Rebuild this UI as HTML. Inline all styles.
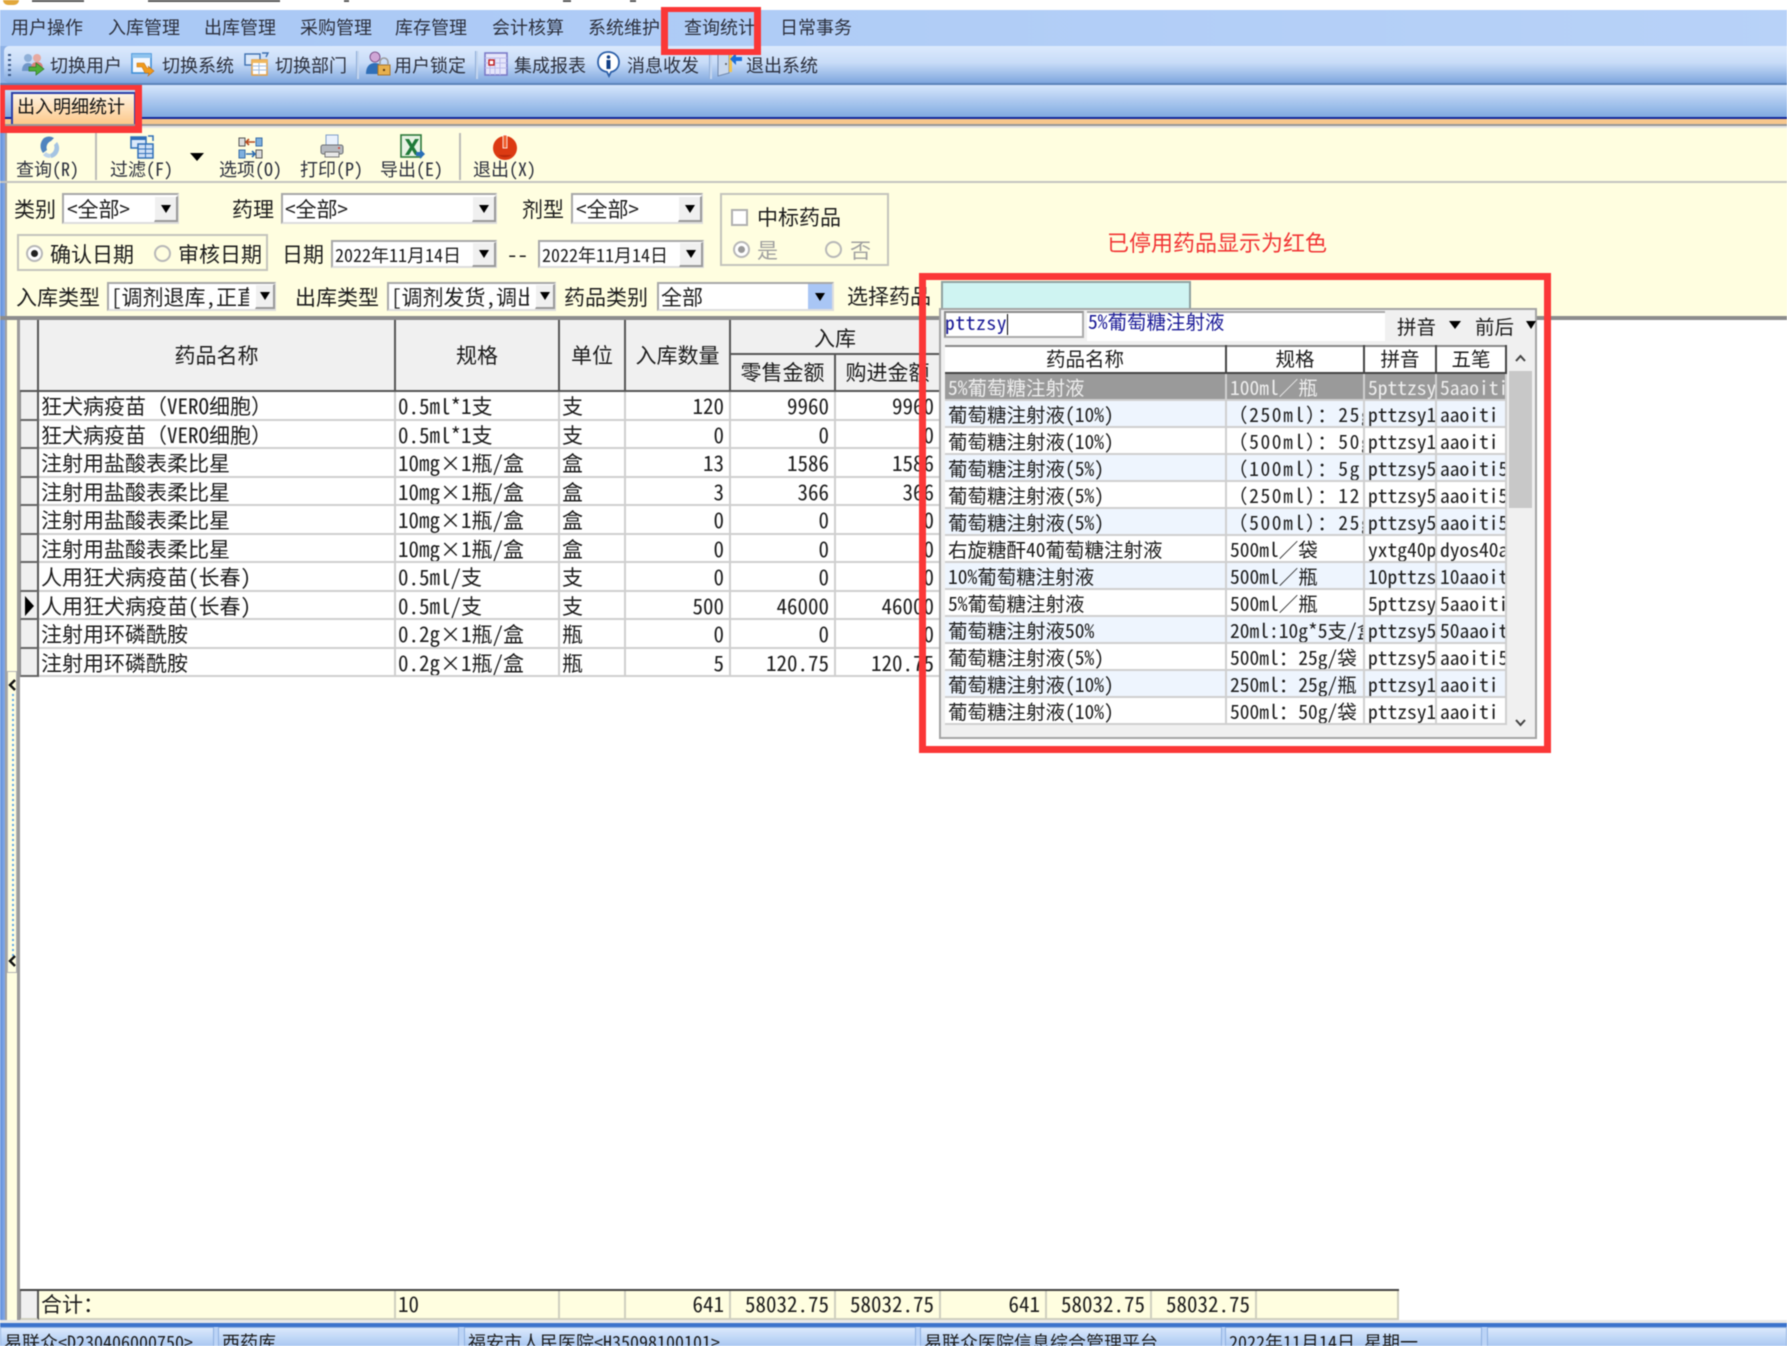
<!DOCTYPE html>
<html lang="zh"><head><meta charset="utf-8"><title>出入明细统计</title>
<style>
html,body{margin:0;padding:0;background:#fff}
#p{position:relative;width:1787px;height:1346px;overflow:hidden;background:#fff;font-family:"Noto Sans Mono CJK SC","WenQuanYi Zen Hei Mono","WenQuanYi Zen Hei","Liberation Mono","Noto Sans CJK SC",monospace;color:#1c1c1c;filter:blur(.45px)}
#p div,#p span,#p svg{position:absolute}
#p td div,#p td span{position:static}
.t{white-space:nowrap;line-height:28px;font-size:21px}
.m{font-size:18px;color:#2b2f3c}
.b{position:absolute;background:#f0f0f0;border-left:1px solid #fff;border-top:1px solid #fff;border-right:2px solid #9a9a9a;border-bottom:2px solid #9a9a9a;box-sizing:border-box}
.b:after{content:"";position:absolute;left:50%;top:50%;margin:-4px 0 0 -5px;border:5px solid transparent;border-top:8px solid #000;border-bottom:0}
.c{background:#fff;border:2px solid #a8a8a8;border-right-color:#ddd;border-bottom-color:#ddd;box-sizing:border-box;overflow:hidden}
.g{border:2px solid #c4c4bc;box-sizing:border-box}
.sep{width:2px;background:#c3d5ee;border-left:1px solid #8fadd8}
.r{border-radius:50%;background:#fff;border:2px solid #b8b8b8;box-sizing:border-box;width:17px;height:17px}
.r:after{content:"";position:absolute;left:3px;top:3px;width:7px;height:7px;border-radius:50%}
.on:after{background:#222}
.dis:after{background:#999}
.red{background:#fb3737;z-index:9}
.h{background:#f0f0f0;text-align:center;line-height:28px;font-size:21px;box-sizing:border-box;border-right:2px solid #555;border-bottom:2px solid #555}
table{border-collapse:separate;border-spacing:0;table-layout:fixed;position:absolute}
td{padding:0;white-space:nowrap;overflow:hidden;box-sizing:border-box}
#gt td{height:28.5px;font-size:21px;line-height:22px;vertical-align:top;border-right:2px solid #cfcfcf;border-bottom:2px solid #cfcfcf;padding:3px 0 0 2px}
#gt td.n{text-align:right;padding:3px 5px 0 0}
#gt td.i{background:#f0f0f0;border-right:2px solid #555;border-bottom:2px solid #666;padding:0;border-left:1px solid #888;font-size:0}
#pt td{height:27px;font-size:19.5px;line-height:25px;border-right:2px solid #cfcfcf;border-bottom:2px solid #cfcfcf;padding-left:3px;background:#fff}
#pt tr.a td{background:#eef5fe}
#pt tr.s td{background:#9a9a9a;color:#eee}
#pt td.w{letter-spacing:1.6px;padding-left:1px}
#tt td{height:29px;font-size:21px;line-height:27px;border-right:2px solid #cfcfbf;border-bottom:2px solid #cfcfbf;background:#fffee0;padding-left:2px}
#tt td.n{text-align:right;padding:0 5px 0 0}
.st{top:1327px;height:19px;background:linear-gradient(#dbe9fc,#aac8f2);border:1px solid #8fb0e0;border-bottom:0;box-sizing:border-box;overflow:hidden}
.st span{left:3px;top:2px;font-size:18px;line-height:24px;white-space:nowrap;color:#1c1c1c}
</style></head><body><div id="p">

<!-- title strip -->
<div style="left:0;top:0;width:1787px;height:10px;background:#fff"></div>
<div style="left:3px;top:0;width:16px;height:5px;background:#e2a83c;border-radius:0 0 8px 8px"></div>
<div style="left:32px;top:0;width:52px;height:2px;background:#555"></div>
<div style="left:148px;top:0;width:132px;height:2px;background:#555"></div>
<div style="left:344px;top:0;width:5px;height:2px;background:#555"></div>
<div style="left:563px;top:0;width:8px;height:2px;background:#555"></div>
<div style="left:630px;top:0;width:6px;height:2px;background:#555"></div>

<!-- menu -->
<div style="left:0;top:10px;width:1787px;height:36px;background:linear-gradient(90deg,#a9c8f5,#b8d2f8)"></div>
<span class="t m" style="left:11px;top:13px">用户操作</span>
<span class="t m" style="left:108px;top:13px">入库管理</span>
<span class="t m" style="left:204px;top:13px">出库管理</span>
<span class="t m" style="left:300px;top:13px">采购管理</span>
<span class="t m" style="left:395px;top:13px">库存管理</span>
<span class="t m" style="left:492px;top:13px">会计核算</span>
<span class="t m" style="left:588px;top:13px">系统维护</span>
<span class="t m" style="left:684px;top:13px">查询统计</span>
<span class="t m" style="left:780px;top:13px">日常事务</span>

<!-- toolbar -->
<div style="left:0;top:46px;width:1787px;height:39px;background:#8fb2e6"></div>
<div style="left:4px;top:46px;width:1783px;height:37px;background:linear-gradient(#dceafd 0,#c8dcf8 45%,#7fa7de 100%);border-radius:5px 0 0 5px"></div>
<div style="left:0;top:83px;width:1787px;height:2px;background:#5c84bb"></div>
<div style="left:8px;top:54px;width:3px;height:22px;background:repeating-linear-gradient(#3d5a88 0,#3d5a88 2px,transparent 2px,transparent 5px)"></div>

<svg style="left:20px;top:52px" width="26" height="25" viewBox="0 0 26 25"><circle cx="8" cy="6" r="4" fill="#8fb0d8"/><circle cx="17" cy="6" r="4" fill="#e7a9a0"/><path d="M2 19c0-6 3-8 6-8s6 2 6 8z" fill="#6f96c8"/><path d="M11 17c0-6 3-7 6-7s6 1 6 7z" fill="#d8807a"/><path d="M9 15h7v-4l8 6-8 6v-4H9z" fill="#4fae3a" stroke="#2e7a22" stroke-width=".7"/></svg>
<span class="t m" style="left:50px;top:51px">切换用户</span>
<svg style="left:131px;top:53px" width="26" height="25" viewBox="0 0 26 25"><rect x="1" y="1" width="19" height="19" fill="#f4f8fe" stroke="#3f8fd8" stroke-width="1.6"/><rect x="1" y="1" width="19" height="4" fill="#8fc3ee"/><path d="M6 10h7l3 5h2l-1-2 6 5-6 5 1-3h-4l-3-6H6z" fill="#f09a1c" stroke="#c56f10" stroke-width=".6"/></svg>
<span class="t m" style="left:162px;top:51px">切换系统</span>
<svg style="left:244px;top:52px" width="26" height="25" viewBox="0 0 26 25"><rect x="1" y="2" width="15" height="11" fill="#dbe9fb" stroke="#3c6fb0" stroke-width="1.4"/><path d="M18 1l6 0-2 4" fill="none" stroke="#3c6fb0" stroke-width="1.4"/><rect x="8" y="8" width="15" height="15" fill="#fff" stroke="#e3a24a" stroke-width="1.6"/><rect x="8" y="8" width="15" height="3" fill="#f0b85e"/><path d="M8 14h15M8 18h15M15 11v12" stroke="#9fbde0" stroke-width="1"/></svg>
<span class="t m" style="left:275px;top:51px">切换部门</span>
<div class="sep" style="left:356px;top:51px;height:28px"></div>
<svg style="left:365px;top:51px" width="26" height="26" viewBox="0 0 26 26"><circle cx="10" cy="6" r="5" fill="#cfa6d6" stroke="#6d3f7a" stroke-width=".8"/><path d="M1 23c0-8 4-11 9-11 3 0 5 1 6 3v8z" fill="#2f6fb8"/><rect x="13" y="14" width="12" height="10" fill="#e7b04d" stroke="#a9742a"/><path d="M15 14v-3a4 4 0 018 0v3" fill="none" stroke="#9a9a9a" stroke-width="1.6"/><rect x="18" y="18" width="2" height="2" fill="#5b3a10"/></svg>
<span class="t m" style="left:394px;top:51px">用户锁定</span>
<div class="sep" style="left:475px;top:51px;height:28px"></div>
<svg style="left:484px;top:52px" width="24" height="24" viewBox="0 0 24 24"><rect x="1" y="1" width="22" height="22" fill="#e6e6fb" stroke="#7b7bc8" stroke-width="1.6"/><path d="M1 6h22M1 11h22M1 16h22M6 6v17M11 6v17M16 6v17" stroke="#bcbcec" stroke-width="1"/><rect x="5" y="8" width="5" height="5" fill="#fff" stroke="#c01818" stroke-width="1.4"/></svg>
<span class="t m" style="left:514px;top:51px">集成报表</span>
<svg style="left:596px;top:50px" width="25" height="28" viewBox="0 0 25 28"><path d="M12 2c6 0 11 4 11 10s-4 9-8 10l-2 4-2-4C6 21 2 18 2 12S6 2 12 2z" fill="#fff" stroke="#2c5fa8" stroke-width="1.8"/><circle cx="12.5" cy="7" r="1.8" fill="#123f86"/><rect x="10.5" y="10" width="4" height="9" fill="#123f86"/></svg>
<span class="t m" style="left:627px;top:51px">消息收发</span>
<div class="sep" style="left:709px;top:51px;height:28px"></div>
<svg style="left:716px;top:51px" width="27" height="26" viewBox="0 0 27 26"><path d="M2 3l11-2v21l-11 3z" fill="#c8d8ee" stroke="#7088ad"/><path d="M13 3h3v18h-3z" fill="#f3c44e"/><circle cx="10" cy="13" r="1" fill="#555"/><path d="M26 6h-6V2l-6 6 6 6v-4h6z" fill="#1c6fd8"/></svg>
<span class="t m" style="left:746px;top:51px">退出系统</span>

<!-- tab bar -->
<div style="left:0;top:85px;width:1787px;height:33px;background:linear-gradient(#d6e6fc,#7ea8e0)"></div>
<div style="left:0;top:117px;width:1787px;height:2px;background:#12269a"></div>
<div style="left:0;top:119px;width:1787px;height:5px;background:#f7c78d"></div>
<div style="left:0;top:124px;width:1787px;height:2px;background:#999"></div>
<div style="left:0;top:126px;width:1787px;height:2px;background:#e6e6e6"></div>
<div style="left:11px;top:92px;width:125px;height:32px;box-sizing:border-box;border:2px solid #2b3fa8;border-bottom:0;background:linear-gradient(#fff4e2,#fdc88a)"></div>
<span class="t m" style="left:17px;top:92px;color:#111">出入明细统计</span>

<!-- yellow panel -->
<div style="left:0;top:128px;width:1787px;height:192px;background:#fffee0"></div>
<div style="left:0;top:128px;width:5px;height:1218px;background:linear-gradient(90deg,#5f8fdc,#86aae6)"></div>
<div style="left:5px;top:128px;width:2px;height:1195px;background:#a0a0a0"></div>
<div style="left:0;top:181px;width:1787px;height:2px;background:#c4c4c0"></div>
<div style="left:7px;top:320px;width:10px;height:1000px;background:#fffee0"></div>
<div style="left:17px;top:320px;width:3px;height:1000px;background:#9a9a9a"></div>
<div style="left:0;top:316px;width:1787px;height:4px;background:#8c8c8c"></div>

<!-- splitter -->
<div style="left:7px;top:671px;width:10px;height:302px;border:1px solid #b5b5b5;box-sizing:border-box;background:#fffee0"></div>
<div style="left:12px;top:694px;width:2px;height:262px;background:repeating-linear-gradient(#5fa6e6 0,#5fa6e6 2px,transparent 2px,transparent 5px)"></div>
<svg style="left:8px;top:678px" width="9" height="14" viewBox="0 0 9 14"><path d="M7 2L2 7l5 5" fill="none" stroke="#111" stroke-width="2.4"/></svg>
<svg style="left:8px;top:954px" width="9" height="14" viewBox="0 0 9 14"><path d="M7 2L2 7l5 5" fill="none" stroke="#111" stroke-width="2.4"/></svg>

<!-- action buttons -->
<div style="left:95px;top:133px;width:2px;height:47px;background:#bdbdb8"></div>
<div style="left:459px;top:133px;width:2px;height:47px;background:#bdbdb8"></div>
<svg style="left:36px;top:135px" width="26" height="26" viewBox="0 0 26 26"><path d="M8 3a10 10 0 0110 0l-3 3a7 7 0 00-4 9l-4 3a11 11 0 011-15z" fill="#4f84bf"/><path d="M21 7a10 10 0 01-6 16l-1-4a7 7 0 004-9z" fill="#a5c4e2"/><path d="M14 23a10 10 0 01-7-3l3-3a6 6 0 005 2z" fill="#bcd3ea"/></svg>
<svg style="left:130px;top:134px" width="24" height="25" viewBox="0 0 24 25"><rect x="1" y="3" width="15" height="11" fill="#dbe9fb" stroke="#2f6fb8" stroke-width="1.5"/><rect x="1" y="3" width="15" height="3" fill="#2f6fb8"/><rect x="8" y="10" width="15" height="14" fill="#cfe0f6" stroke="#2f6fb8" stroke-width="1.5"/><path d="M8 15h15M8 19.5h15M15.5 10v14" stroke="#2f6fb8"/><path d="M18 2h5v5" fill="none" stroke="#2f6fb8" stroke-width="1.5"/></svg>
<svg style="left:238px;top:136px" width="25" height="24" viewBox="0 0 25 24"><rect x="1" y="2" width="6" height="8" fill="#ddd" stroke="#555"/><rect x="18" y="2" width="6" height="8" fill="#7fb0de" stroke="#3a6ea8"/><path d="M8 6h9M11 3L8 6l3 3" fill="none" stroke="#b84a20" stroke-width="1.6"/><rect x="1" y="14" width="6" height="8" fill="#7fb0de" stroke="#3a6ea8"/><rect x="18" y="14" width="6" height="8" fill="#ddd" stroke="#555"/><path d="M8 18h9M14 15l3 3-3 3" fill="none" stroke="#2a6ab0" stroke-width="1.6"/></svg>
<svg style="left:320px;top:134px" width="24" height="25" viewBox="0 0 24 25"><rect x="6" y="1" width="12" height="11" fill="#eaf2fd" stroke="#7f9ec8"/><rect x="1" y="11" width="22" height="9" rx="2" fill="#b5b9bf" stroke="#6c7076"/><rect x="5" y="18" width="14" height="5" fill="#e8e8e8" stroke="#777"/><circle cx="19" cy="14" r="1" fill="#d04030"/></svg>
<svg style="left:400px;top:134px" width="26" height="27" viewBox="0 0 26 27"><rect x="1" y="1" width="20" height="22" fill="#e8f3e4" stroke="#2c7a3a" stroke-width="1.6"/><path d="M5 5h4l3 5 3-5h4l-5 8 5 8h-4l-3-5-3 5H5l5-8z" fill="#1f7a38"/><path d="M16 18h4v-3l5 5-5 5v-3h-4z" fill="#2a6fb8"/></svg>
<svg style="left:492px;top:133px" width="26" height="28" viewBox="0 0 26 28"><circle cx="13" cy="15" r="12" fill="#dc3a12"/><path d="M6 22a12 12 0 0014 0z" fill="#b82a0c"/><rect x="11" y="2" width="4" height="13" fill="#f06030" stroke="#fff" stroke-width=".8"/></svg>

<span class="t m" style="left:16px;top:155px">查询(R)</span>
<span class="t m" style="left:110px;top:155px">过滤(F)</span>
<span style="left:190px;top:153px;width:0;height:0;border:7px solid transparent;border-top:8px solid #000;border-bottom:0"></span>
<span class="t m" style="left:219px;top:155px">选项(O)</span>
<span class="t m" style="left:300px;top:155px">打印(P)</span>
<span class="t m" style="left:380px;top:155px">导出(E)</span>
<span class="t m" style="left:473px;top:155px">退出(X)</span>

<!-- row 1 -->
<span class="t" style="left:14px;top:195px">类别</span>
<div class="c" style="left:62px;top:193px;width:117px;height:31px"></div><span class="t" style="left:67px;top:195px">&lt;全部&gt;</span><div class="b" style="left:154px;top:196px;width:24px;height:26px"></div>
<span class="t" style="left:232px;top:195px">药理</span>
<div class="c" style="left:281px;top:193px;width:216px;height:31px"></div><span class="t" style="left:285px;top:195px">&lt;全部&gt;</span><div class="b" style="left:472px;top:196px;width:24px;height:26px"></div>
<span class="t" style="left:522px;top:195px">剂型</span>
<div class="c" style="left:571px;top:193px;width:132px;height:31px"></div><span class="t" style="left:576px;top:195px">&lt;全部&gt;</span><div class="b" style="left:678px;top:196px;width:24px;height:26px"></div>

<div class="g" style="left:720px;top:193px;width:169px;height:73px"></div>
<div style="left:731px;top:209px;width:17px;height:17px;background:#fff;border:2px solid #b0b0b0;box-sizing:border-box"></div>
<span class="t" style="left:757px;top:203px">中标药品</span>
<div class="r dis" style="left:733px;top:241px"></div><span class="t" style="left:757px;top:236px;color:#a0a0a0">是</span>
<div class="r" style="left:825px;top:241px;background:#fffee0"></div><span class="t" style="left:850px;top:236px;color:#a0a0a0">否</span>

<!-- row 2 -->
<div class="g" style="left:17px;top:234px;width:251px;height:37px"></div>
<div class="r on" style="left:26px;top:245px"></div><span class="t" style="left:50px;top:240px">确认日期</span>
<div class="r" style="left:154px;top:245px;background:#fffee0"></div><span class="t" style="left:178px;top:240px">审核日期</span>
<span class="t" style="left:282px;top:240px">日期</span>
<div class="c" style="left:331px;top:240px;width:166px;height:28px"></div><span class="t m" style="left:335px;top:241px;color:#1c1c1c">2022年11月14日</span><div class="b" style="left:472px;top:242px;width:24px;height:25px"></div>
<span class="t" style="left:507px;top:240px">--</span>
<div class="c" style="left:538px;top:240px;width:166px;height:28px"></div><span class="t m" style="left:542px;top:241px;color:#1c1c1c">2022年11月14日</span><div class="b" style="left:679px;top:242px;width:24px;height:25px"></div>

<!-- row 3 -->
<span class="t" style="left:16px;top:283px">入库类型</span>
<div class="c" style="left:107px;top:282px;width:169px;height:29px"><span class="t" style="left:2px;top:-1px;width:138px;overflow:hidden">[调剂退库,正直</span></div><div class="b" style="left:255px;top:284px;width:20px;height:25px"></div>
<span class="t" style="left:295px;top:283px">出库类型</span>
<div class="c" style="left:387px;top:282px;width:169px;height:29px"><span class="t" style="left:2px;top:-1px;width:138px;overflow:hidden">[调剂发货,调出</span></div><div class="b" style="left:535px;top:284px;width:20px;height:25px"></div>
<span class="t" style="left:564px;top:283px">药品类别</span>
<div class="c" style="left:657px;top:282px;width:177px;height:29px"></div><span class="t" style="left:661px;top:283px">全部</span>
<div style="left:808px;top:284px;width:24px;height:25px;background:#a9c6f5"></div>
<div style="left:815px;top:293px;width:0;height:0;border:5px solid transparent;border-top:8px solid #000;border-bottom:0"></div>
<span class="t" style="left:847px;top:282px">选择药品</span>
<div style="left:941px;top:281px;width:250px;height:35px;background:#cff4f2;border:2px solid #8fa0a0;border-bottom:0;box-sizing:border-box"></div>
<span class="t" style="left:1107px;top:228px;color:#f23434;font-size:22px">已停用药品显示为红色</span>

<!-- grid header -->
<div class="h" style="left:20px;top:320px;width:19px;height:72px"></div>
<div class="h" style="left:39px;top:320px;width:357px;height:72px;line-height:70px">药品名称</div>
<div class="h" style="left:396px;top:320px;width:164px;height:72px;line-height:70px">规格</div>
<div class="h" style="left:560px;top:320px;width:66px;height:72px;line-height:70px">单位</div>
<div class="h" style="left:626px;top:320px;width:105px;height:72px;line-height:70px">入库数量</div>
<div class="h" style="left:731px;top:320px;width:210px;height:35px;line-height:36px">入库</div>
<div class="h" style="left:731px;top:355px;width:105px;height:37px;line-height:35px">零售金额</div>
<div class="h" style="left:836px;top:355px;width:105px;height:37px;line-height:35px">购进金额</div>

<!-- grid body -->
<table id="gt" style="left:20px;top:392px;width:921px"><colgroup><col style="width:19px"><col style="width:357px"><col style="width:164px"><col style="width:66px"><col style="width:105px"><col style="width:105px"><col style="width:105px"></colgroup>
<tr><td class="i"></td><td>狂犬病疫苗（VERO细胞）</td><td>0.5ml*1支</td><td>支</td><td class="n">120</td><td class="n">9960</td><td class="n">9960</td></tr>
<tr><td class="i"></td><td>狂犬病疫苗（VERO细胞）</td><td>0.5ml*1支</td><td>支</td><td class="n">0</td><td class="n">0</td><td class="n">0</td></tr>
<tr><td class="i"></td><td>注射用盐酸表柔比星</td><td>10mg×1瓶/盒</td><td>盒</td><td class="n">13</td><td class="n">1586</td><td class="n">1586</td></tr>
<tr><td class="i"></td><td>注射用盐酸表柔比星</td><td>10mg×1瓶/盒</td><td>盒</td><td class="n">3</td><td class="n">366</td><td class="n">366</td></tr>
<tr><td class="i"></td><td>注射用盐酸表柔比星</td><td>10mg×1瓶/盒</td><td>盒</td><td class="n">0</td><td class="n">0</td><td class="n">0</td></tr>
<tr><td class="i"></td><td>注射用盐酸表柔比星</td><td>10mg×1瓶/盒</td><td>盒</td><td class="n">0</td><td class="n">0</td><td class="n">0</td></tr>
<tr><td class="i"></td><td>人用狂犬病疫苗(长春)</td><td>0.5ml/支</td><td>支</td><td class="n">0</td><td class="n">0</td><td class="n">0</td></tr>
<tr><td class="i"></td><td>人用狂犬病疫苗(长春)</td><td>0.5ml/支</td><td>支</td><td class="n">500</td><td class="n">46000</td><td class="n">46000</td></tr>
<tr><td class="i"></td><td>注射用环磷酰胺</td><td>0.2g×1瓶/盒</td><td>瓶</td><td class="n">0</td><td class="n">0</td><td class="n">0</td></tr>
<tr><td class="i"></td><td>注射用环磷酰胺</td><td>0.2g×1瓶/盒</td><td>瓶</td><td class="n">5</td><td class="n">120.75</td><td class="n">120.75</td></tr>
</table>
<div style="left:25px;top:596px;width:0;height:0;border:10px solid transparent;border-left:9px solid #000;border-right:0"></div>

<!-- totals -->
<div style="left:20px;top:1289px;width:1379px;height:2px;background:#444"></div>
<table id="tt" style="left:20px;top:1291px;width:1379px"><colgroup><col style="width:19px"><col style="width:357px"><col style="width:164px"><col style="width:66px"><col style="width:105px"><col style="width:105px"><col style="width:105px"><col style="width:106px"><col style="width:105px"><col style="width:105px"><col style="width:142px"></colgroup>
<tr><td style="background:#f0f0f0;border-right:2px solid #555;border-left:1px solid #888;padding:0"></td><td>合计：</td><td>10</td><td></td><td class="n">641</td><td class="n">58032.75</td><td class="n">58032.75</td><td class="n">641</td><td class="n">58032.75</td><td class="n">58032.75</td><td></td></tr>
</table>

<!-- status -->
<div style="left:0;top:1320px;width:1787px;height:3px;background:#e8e8e8"></div>
<div style="left:0;top:1323px;width:1787px;height:4px;background:#3b73cc"></div>
<div style="left:0;top:1327px;width:1787px;height:19px;background:#bcd4f6"></div>
<div class="st" style="left:0;width:214px"><span>易联众&lt;D230406000750&gt;</span></div>
<div class="st" style="left:218px;width:241px"><span>西药库</span></div>
<div class="st" style="left:464px;width:452px"><span>福安市人民医院&lt;H35098100101&gt;</span></div>
<div class="st" style="left:920px;width:302px"><span>易联众医院信息综合管理平台</span></div>
<div class="st" style="left:1225px;width:257px"><span>2022年11月14日 星期一</span></div>
<div class="st" style="left:1487px;width:300px"></div>

<!-- popup -->
<div style="left:939px;top:308px;width:598px;height:431px;background:#f0f0f0;border:2px solid #a4a4a4;box-sizing:border-box;z-index:5">
 <div style="left:3px;top:1px;width:140px;height:27px;background:#fff;border:2px solid #8a8a8a;border-right-color:#aaa;border-bottom-color:#aaa;box-sizing:border-box"></div>
 <span class="t" style="left:4px;top:-2px;font-size:19.5px;color:#1a1a96;line-height:28px;letter-spacing:.6px">pttzsy</span>
 <div style="left:66px;top:4px;width:1px;height:21px;background:#000"></div>
 <div style="left:146px;top:1px;width:298px;height:30px;background:#fff;border-top:2px solid #aaa;box-sizing:border-box"></div>
 <span class="t" style="left:147px;top:-3px;font-size:19.5px;color:#1a1a96">5%葡萄糖注射液</span>
 <span class="t" style="left:456px;top:2px;font-size:19.5px">拼音</span>
 <div style="left:508px;top:11px;width:0;height:0;border:6px solid transparent;border-top:8px solid #000;border-bottom:0"></div>
 <span class="t" style="left:534px;top:2px;font-size:19.5px">前后</span>
 <div style="left:585px;top:11px;width:0;height:0;border:5px solid transparent;border-top:8px solid #000;border-bottom:0"></div>
 <div style="left:4px;top:35px;width:562px;height:29px;background:#fff;border-top:2px solid #888;border-bottom:2px solid #444;box-sizing:border-box"></div>
 <div style="left:284px;top:35px;width:2px;height:29px;background:#444"></div>
 <div style="left:422px;top:35px;width:2px;height:29px;background:#444"></div>
 <div style="left:494px;top:35px;width:2px;height:29px;background:#444"></div>
 <div style="left:564px;top:35px;width:2px;height:29px;background:#444"></div>
 <span class="t" style="left:4px;top:34px;width:280px;text-align:center;font-size:19.5px">药品名称</span>
 <span class="t" style="left:286px;top:34px;width:136px;text-align:center;font-size:19.5px">规格</span>
 <span class="t" style="left:424px;top:34px;width:70px;text-align:center;font-size:19.5px">拼音</span>
 <span class="t" style="left:496px;top:34px;width:68px;text-align:center;font-size:19.5px">五笔</span>
 <table id="pt" style="left:4px;top:64px;width:562px"><colgroup><col style="width:282px"><col style="width:138px"><col style="width:72px"><col style="width:70px"></colgroup>
 <tr class="s"><td>5%葡萄糖注射液</td><td>100ml／瓶</td><td>5pttzsy</td><td>5aaoiti</td></tr>
 <tr class="a"><td>葡萄糖注射液(10%)</td><td class="w">（250ml）：25g</td><td>pttzsy10</td><td>aaoiti</td></tr>
 <tr><td>葡萄糖注射液(10%)</td><td class="w">（500ml）：50g</td><td>pttzsy10</td><td>aaoiti</td></tr>
 <tr class="a"><td>葡萄糖注射液(5%)</td><td class="w">（100ml）：5g</td><td>pttzsy5</td><td>aaoiti5</td></tr>
 <tr><td>葡萄糖注射液(5%)</td><td class="w">（250ml）：12.5g</td><td>pttzsy5</td><td>aaoiti5</td></tr>
 <tr class="a"><td>葡萄糖注射液(5%)</td><td class="w">（500ml）：25g</td><td>pttzsy5</td><td>aaoiti5</td></tr>
 <tr><td>右旋糖酐40葡萄糖注射液</td><td>500ml／袋</td><td>yxtg40pttzsy</td><td>dyos40aaoiti</td></tr>
 <tr class="a"><td>10%葡萄糖注射液</td><td>500ml／瓶</td><td>10pttzsy</td><td>10aaoiti</td></tr>
 <tr><td>5%葡萄糖注射液</td><td>500ml／瓶</td><td>5pttzsy</td><td>5aaoiti</td></tr>
 <tr class="a"><td>葡萄糖注射液50%</td><td>20ml:10g*5支/盒</td><td>pttzsy50</td><td>50aaoiti</td></tr>
 <tr><td>葡萄糖注射液(5%)</td><td>500ml：25g/袋</td><td>pttzsy5</td><td>aaoiti5</td></tr>
 <tr class="a"><td>葡萄糖注射液(10%)</td><td>250ml：25g/瓶</td><td>pttzsy10</td><td>aaoiti</td></tr>
 <tr><td>葡萄糖注射液(10%)</td><td>500ml：50g/袋</td><td>pttzsy10</td><td>aaoiti</td></tr>
 </table>
 <div style="left:568px;top:61px;width:23px;height:137px;background:#c8c8c8"></div>
 <svg style="left:573px;top:43px" width="13" height="10" viewBox="0 0 13 10"><path d="M2 8l4.5-5L11 8" fill="none" stroke="#444" stroke-width="2"/></svg>
 <svg style="left:573px;top:408px" width="13" height="10" viewBox="0 0 13 10"><path d="M2 2l4.5 5L11 2" fill="none" stroke="#444" stroke-width="2"/></svg>
</div>

<!-- red annotation boxes -->
<div class="red" style="left:661px;top:7px;width:100px;height:5px"></div>
<div class="red" style="left:661px;top:49px;width:100px;height:6px"></div>
<div class="red" style="left:661px;top:7px;width:7px;height:48px"></div>
<div class="red" style="left:754px;top:7px;width:7px;height:48px"></div>

<div class="red" style="left:0;top:85px;width:142px;height:5px"></div>
<div class="red" style="left:0;top:126px;width:142px;height:7px"></div>
<div class="red" style="left:0;top:85px;width:5px;height:48px"></div>
<div class="red" style="left:135px;top:85px;width:7px;height:48px"></div>

<div class="red" style="left:919px;top:273px;width:632px;height:7px"></div>
<div class="red" style="left:919px;top:746px;width:632px;height:7px"></div>
<div class="red" style="left:919px;top:273px;width:7px;height:480px"></div>
<div class="red" style="left:1544px;top:273px;width:7px;height:480px"></div>

</div></body></html>
